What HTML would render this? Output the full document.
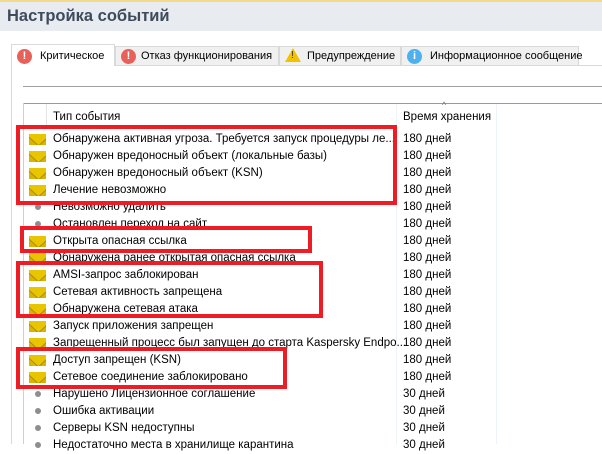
<!DOCTYPE html>
<html><head><meta charset="utf-8"><style>
*{margin:0;padding:0;box-sizing:border-box}
body{width:602px;height:444px;overflow:hidden;background:#fff;font-family:"Liberation Sans","DejaVu Sans",sans-serif;font-size:11.5px;color:#000;position:relative}
.hdr{position:absolute;left:0;top:0;width:602px;height:31px;background:#e8ebef;border-top:2px solid #f3d98a}
.hdr span{position:absolute;left:7px;top:5px;font-size:16.5px;font-weight:bold;color:#3d4b5c}
.a{position:absolute}
.tab{position:absolute;top:46px;height:19px;background:#f0f0f0;border:1px solid #d9d9d9;border-bottom:none;line-height:18px;white-space:nowrap;font-size:11px}
.tab.sel{top:44px;height:22px;background:#fff;z-index:2;line-height:22px}
.ic{position:absolute;left:5px;top:2px;width:15px;height:15px;border-radius:50%;color:#fff;font-weight:bold;font-size:11px;line-height:15px;text-align:center}
.row{position:absolute;left:53px;height:17px;line-height:17px;white-space:nowrap}
.t{position:absolute;left:403px;height:17px;line-height:17px}
.env{position:absolute;left:29px;width:17px;height:11px;background:#d8b400;overflow:hidden}
.env:after{content:"";position:absolute;left:1px;top:-8px;width:15px;height:15px;transform:scaleX(1.1) rotate(45deg);border:1px solid #b08c00;background:#e9c500;transform-origin:center}
.dot{position:absolute;left:35px;width:6px;height:6px;border-radius:50%;background:#8e8e8e}
.box{position:absolute;border:4px solid #ee1c25}
#r{position:absolute;left:0;top:1px;width:602px;height:444px}
</style></head><body>
<div class="hdr"><span>Настройка событий</span></div>
<div class="a" style="left:11px;top:65px;width:1px;height:379px;background:#d9d9d9"></div>
<div class="a" style="left:11px;top:65px;width:591px;height:1px;background:#d9d9d9"></div>
<div class="tab sel" style="left:11px;width:104px"><div class="ic" style="background:#e8605a;top:4px">!</div><span style="position:absolute;left:28px">Критическое</span></div>
<div class="tab" style="left:115px;width:164px"><div class="ic" style="background:#e8605a">!</div><span style="position:absolute;left:25px">Отказ функционирования</span></div>
<div class="tab" style="left:279px;width:122px"><span style="position:absolute;left:5px;top:1px;width:0;height:0;border-left:8px solid transparent;border-right:8px solid transparent;border-bottom:14px solid #f2c200"></span><span style="position:absolute;left:11px;top:0;font-size:10px;color:#333">!</span><span style="position:absolute;left:27px">Предупреждение</span></div>
<div class="tab" style="left:401px;width:178px"><div class="ic" style="background:#4fb0ee">i</div><span style="position:absolute;left:28px">Информационное сообщение</span></div>
<div class="a" style="left:23px;top:86px;width:579px;height:1px;background:#a0a0a0"></div>
<div class="a" style="left:23px;top:103px;width:579px;height:1px;background:#9a9a9a"></div>
<div class="a" style="left:23px;top:103px;width:1px;height:341px;background:#d0d0d0"></div>
<div class="a" style="left:46px;top:104px;width:1px;height:24px;background:#e3e3e3"></div>
<div class="a" style="left:396px;top:104px;width:1px;height:340px;background:#eef2fa"></div>
<div class="a" style="left:496px;top:104px;width:1px;height:340px;background:#eef2fa"></div>
<div class="a" style="left:53px;top:111px">Тип события</div>
<div class="a" style="left:403px;top:111px">Время хранения</div>
<div class="a" style="left:442px;top:100px;font-size:9px;color:#777">^</div>
<div id="r">
<div class="env" style="top:133px"></div><div class="row" style="top:130px">Обнаружена активная угроза. Требуется запуск процедуры ле...</div><div class="t" style="top:130px">180 дней</div>
<div class="env" style="top:150px"></div><div class="row" style="top:147px">Обнаружен вредоносный объект (локальные базы)</div><div class="t" style="top:147px">180 дней</div>
<div class="env" style="top:167px"></div><div class="row" style="top:164px">Обнаружен вредоносный объект (KSN)</div><div class="t" style="top:164px">180 дней</div>
<div class="env" style="top:184px"></div><div class="row" style="top:181px">Лечение невозможно</div><div class="t" style="top:181px">180 дней</div>
<div class="dot" style="top:203px"></div><div class="row" style="top:198px">Невозможно удалить</div><div class="t" style="top:198px">180 дней</div>
<div class="dot" style="top:220px"></div><div class="row" style="top:215px">Остановлен переход на сайт</div><div class="t" style="top:215px">180 дней</div>
<div class="env" style="top:235px"></div><div class="row" style="top:232px">Открыта опасная ссылка</div><div class="t" style="top:232px">180 дней</div>
<div class="env" style="top:252px"></div><div class="row" style="top:249px">Обнаружена ранее открытая опасная ссылка</div><div class="t" style="top:249px">180 дней</div>
<div class="env" style="top:269px"></div><div class="row" style="top:266px">AMSI-запрос заблокирован</div><div class="t" style="top:266px">180 дней</div>
<div class="env" style="top:286px"></div><div class="row" style="top:283px">Сетевая активность запрещена</div><div class="t" style="top:283px">180 дней</div>
<div class="env" style="top:303px"></div><div class="row" style="top:300px">Обнаружена сетевая атака</div><div class="t" style="top:300px">180 дней</div>
<div class="env" style="top:320px"></div><div class="row" style="top:317px">Запуск приложения запрещен</div><div class="t" style="top:317px">180 дней</div>
<div class="env" style="top:337px"></div><div class="row" style="top:334px">Запрещенный процесс был запущен до старта Kaspersky Endpo...</div><div class="t" style="top:334px">180 дней</div>
<div class="env" style="top:354px"></div><div class="row" style="top:351px">Доступ запрещен (KSN)</div><div class="t" style="top:351px">180 дней</div>
<div class="env" style="top:371px"></div><div class="row" style="top:368px">Сетевое соединение заблокировано</div><div class="t" style="top:368px">180 дней</div>
<div class="dot" style="top:390px"></div><div class="row" style="top:385px">Нарушено Лицензионное соглашение</div><div class="t" style="top:385px">30 дней</div>
<div class="dot" style="top:407px"></div><div class="row" style="top:402px">Ошибка активации</div><div class="t" style="top:402px">30 дней</div>
<div class="dot" style="top:424px"></div><div class="row" style="top:419px">Серверы KSN недоступны</div><div class="t" style="top:419px">30 дней</div>
<div class="dot" style="top:441px"></div><div class="row" style="top:436px">Недостаточно места в хранилище карантина</div><div class="t" style="top:436px">30 дней</div>
</div>
<div class="box" style="left:16px;top:125px;width:381px;height:80px"></div>
<div class="box" style="left:20px;top:226px;width:292px;height:27px"></div>
<div class="box" style="left:16px;top:261px;width:307px;height:57px"></div>
<div class="box" style="left:16px;top:347px;width:271px;height:42px"></div>
</body></html>
